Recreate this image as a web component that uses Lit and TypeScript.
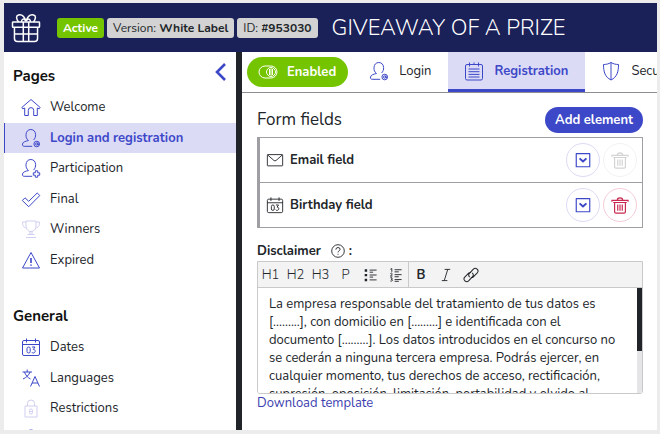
import { LitElement, html, css, svg } from "lit";
import { customElement, state } from "lit/decorators.js";
import { classMap } from "lit/directives/class-map.js";

const icons: Record<string, unknown> = {
  home: svg`<path d="M.8 10.500 10 2.500l9.200 8-1 1.300-1.900-.8V18.500h-3.600v-5.200a2.700 2.700 0 0 0-5.400 0v5.200H3.700V11l-1.900.8z"/>`,
  userAt: svg`<path d="M7.500 12.500C5.500 11 4.800 9 5 6.500 5.200 3.500 7 1.500 9.800 1.500s4.700 2 4.800 5c.1 2-.5 4-2 5.500M7.500 12.500c-3 .8-5.500 1.300-6 3.500-.3 1.300.3 2.300 1.700 2.300h8"/><circle cx="15.700" cy="16" r="2.800"/><circle cx="15.700" cy="16" r="1.200"/><path d="M16.900 14.500v2l1.200.3"/>`,
  userPlus: svg`<path d="M7.500 12.500C5.500 11 4.800 9 5 6.500 5.200 3.500 7 1.500 9.800 1.500s4.700 2 4.800 5c.1 2-.5 4-2 5.500M7.500 12.500c-3 .8-5.500 1.300-6 3.500-.3 1.300.3 2.300 1.700 2.300h8"/><path d="M14.300 12.800h2.400v2h2v2.400h-2v2h-2.400v-2h-2v-2.400h2z"/>`,
  check: svg`<path d="m1.300 11.500 2.700-2.700 3.700 3.500 8.500-8.300 2.600 2.500L7.700 17.700z"/>`,
  trophy: svg`<path d="M5 2h10v4c0 4-2 6.500-5 6.500S5 10 5 6zM5 3H1.500c0 4 1 5.500 4.200 6M15 3h3.500c0 4-1 5.500-4.200 6M9 12.500v3h2v-3M6.500 15.500h7M5 18.500h10"/>`,
  warning: svg`<path d="M10 2.500 1.500 18h17z"/><path d="M10 8v5m0 1.500v1.300" stroke-width="1.600"/>`,
  calendar: svg`<rect x="1.500" y="3.500" width="17" height="15" rx="1.500"/><path d="M1.500 7.500h17M5.500 1.500v4M14.500 1.500v4"/><rect x="6" y="10" width="3.200" height="6" rx="1.600"/><path d="M11 10h3l-1.700 2.400c2.800 0 2.300 3.600 0 3.600q-1.100 0-1.500-.8"/>`,
  languages: svg`<path d="M1.500 4h9.500M6.200 1.500V4M3.500 4c1 3 3 5.500 6 7M9 4c-1 3-3.500 5.500-7 7M9.500 18.500l4.500-10 4.500 10M11 15h6"/>`,
  lock: svg`<rect x="4" y="8" width="12" height="11"/><path d="M6.500 8V5.500a3.500 3.500 0 0 1 7 0V8"/><rect x="8.500" y="11" width="3" height="5" rx="1.500"/><path d="M8.500 13.500h3"/>`,
  dot: svg`<circle cx="10" cy="5.500" r="4.500"/>`,
  form: svg`<rect x="1.500" y="3.500" width="17" height="15.500" rx="1.500"/><path d="M5.500 1.500v4M10 1.500v2M14.500 1.500v4M4.500 8h11M4.500 10.700h11M4.500 13.400h11M4.500 16h11"/>`,
  shield: svg`<path d="M10 1.500C7.500 3 5 3.500 2.500 3.500c0 7.500 1.500 12.500 7.500 15.500 6-3 7.500-8 7.500-15.500-2.500 0-5-.5-7.500-2zM10 1.500V19"/>`,
  toggle: svg`<rect x="1" y="4" width="18" height="12" rx="6"/><circle cx="13" cy="10" r="4.500"/><path d="M11.500 7v6M13 6.500v7M14.500 7v6"/>`,
  mail: svg`<rect x="1.500" y="4" width="17" height="12.500" rx=".5"/><path d="m2 4.500 6.800 6q1.200 1 2.400 0l6.800-6"/>`,
  down: svg`<rect x="2.500" y="3" width="15" height="14.500" stroke-width="1.300"/><path d="m6.200 8.200 3.800 3.500 3.800-3.500" stroke-width="2.200"/>`,
  trash: svg`<path d="M.5 4.800h19M1 6.500V4.800M19 6.500V4.800M7 4.500c0-2 1-2.500 3-2.500s3 .5 3 2.500M2.500 7.200h15M4 7.200V17.500q0 1.500 1.500 1.500h9q1.500 0 1.500-1.500V7.200M7.500 9.500v7M10 9.500v7M12.500 9.500v7" stroke-width="1.300"/>`,
  bullets: svg`<path d="M8 3h10M8 6h5M8 10h10M8 13h5M8 17h10"/><path d="M1 3.500h3.500M1 10.200h3.500M1 17h3.500" stroke-width="3.500"/>`,
  numbers: svg`<path d="M8 2.500h10M8 5.500h6M8 9.500h10M8 12.500h6M8 16.500h10M8 19h6"/><path d="m2 1.800 2-1v4.700M2 8q2-1.500 2.500 0T2 11.500h3M2 14q2.500-1 2.500.7 0 1.300-1.500 1.300 2 0 2 1.500-.5 2-3 1"/>`,
  italic: svg`<path d="M8 2h8M4 18h8M12.500 2l-5 16"/>`,
  link: svg`<path d="M8.500 12.800q-2.700-2.500-.2-5.200l4.700-5q2.200-2 4.600.2t.2 4.600l-4.800 4.800q-1.400 1.400-3.200.9M11.500 7.200q2.700 2.500.2 5.200l-4.700 5q-2.200 2-4.600-.2t-.2-4.600L7 7.800q1.400-1.400 3.200-.9"/>`,
  help: svg`<circle cx="10" cy="10" r="9"/><path d="M7 8q0-3 3-3t3 2.600c0 2-3 2.200-3 4.400M10 14v1.300"/>`,
  back: svg`<path d="m14 2-8 8 8 8" stroke-width="2.600"/>`,
  gift: svg`<rect x="1" y="6" width="18" height="3.500" rx=".4"/><path d="M2.300 9.500V17q0 2 2 2h11.400q2 0 2-2V9.500M8.200 6v13M11.800 6v13M2.300 14h15.400M10 5.500C9 2.500 7 .8 5 1.300S3.600 4.300 5 6M10 5.500c1-3 3-4.700 5-4.200s1.400 3 0 4.700M10 5.500C8.500 3 7 4 7 6M10 5.500c1.500-2.500 3-1.500 3 .5"/>`,
};

const icon = (name: string) => html`<svg class="icon" viewBox="0 0 20 20" aria-hidden="true">${icons[name]}</svg>`;

interface NavItem { label: string; icon: string; faint?: boolean; current?: boolean }

const pages: NavItem[] = [
  { label: "Welcome", icon: "home" },
  { label: "Login and registration", icon: "userAt", current: true },
  { label: "Participation", icon: "userPlus" },
  { label: "Final", icon: "check" },
  { label: "Winners", icon: "trophy", faint: true },
  { label: "Expired", icon: "warning" },
];

const general: NavItem[] = [
  { label: "Dates", icon: "calendar" },
  { label: "Languages", icon: "languages" },
  { label: "Restrictions", icon: "lock", faint: true },
];

const tabs: NavItem[] = [
  { label: "Login", icon: "userAt" },
  { label: "Registration", icon: "form", current: true },
  { label: "Security", icon: "shield" },
];

const fields = [
  { label: "Email field", icon: "mail", locked: true },
  { label: "Birthday field", icon: "calendar", locked: false },
];

const disclaimer = `La empresa responsable del tratamiento de tus datos es
[.........], con domicilio en [.........] e identificada con el
documento [.........]. Los datos introducidos en el concurso no
se cederán a ninguna tercera empresa. Podrás ejercer, en
cualquier momento, tus derechos de acceso, rectificación,
supresión, oposición, limitación, portabilidad y olvido al`;

@customElement("app-root")
export class AppRoot extends LitElement {
  @state() private text = disclaimer;

  static styles = css`
    :host {
      display: block;
      box-sizing: border-box;
      height: 100vh;
      padding: 3px 3px 4px 4px;
      background: #ececec;
      color: #212529;
      font: 13px/18px Nunito, "Noto Sans", sans-serif;
    }
    *, *::before { box-sizing: border-box; }
    button { font: inherit; color: inherit; border: 0; background: none; padding: 0; cursor: pointer; }
    a { color: inherit; text-decoration: none; }
    h1, h2, ul { margin: 0; padding: 0; list-style: none; }
    .icon { width: 20px; height: 20px; flex: none; fill: none; stroke: currentColor; stroke-width: 1; stroke-linejoin: round; display: block; }
    .app { height: 100%; display: flex; flex-direction: column; background: #fff; overflow: hidden; }
    .top { flex: none; height: 49px; display: flex; align-items: center; background: #1a2058; color: #fff; padding-left: 7px; white-space: nowrap; }
    .top .icon { width: 30px; height: 30px; margin-right: 16px; }
    .badges { display: flex; gap: 3px; margin-right: 14px; }
    .badge { height: 20px; border-radius: 3px; padding: 0 6px; line-height: 20px; font-size: 12px; background: #d3d3d3; color: #212529; }
    .badge.active { background: #74c400; color: #fff; font-weight: 700; }
    .title { font-size: 22px; line-height: 30px; font-weight: 300; }
    .body { flex: 1; min-height: 0; display: flex; }
    .side { flex: none; width: 238px; border-right: 6px solid #212529; overflow: hidden; }
    .head { display: flex; justify-content: space-between; align-items: center; height: 40px; padding: 8px 5px 0 9px; }
    .general { margin-top: 17px; }
    .heading { font-size: 15px; line-height: 20px; font-weight: 700; color: #111; }
    .collapse { color: #3d48c8; margin-top: -8px; }
    .collapse .icon { stroke-linejoin: miter; }
    .list { display: flex; flex-direction: column; justify-content: space-between; height: 183px; }
    .list.short { height: 122px; }
    .item { display: flex; align-items: center; gap: 9px; height: 30px; padding-left: 17px; color: #212529; }
    .item .icon, .tab .icon { color: #3d48c8; }
    .item.current { padding-left: 16px; border-left: 1px solid #3d48c8; background: #dcdbf6; color: #3d48c8; font-weight: 700; }
    .item.faint .icon { color: #cfcff0; }
    .main { flex: 1; min-width: 0; overflow: hidden; }
    .tabs { display: flex; height: 41px; border-bottom: 1px solid #8d8d93; padding-left: 5px; overflow: hidden; white-space: nowrap; }
    .enabled { flex: none; align-self: center; display: flex; align-items: center; gap: 9px; height: 30px; border-radius: 15px; background: #74c400; color: #fff; font-weight: 700; padding: 0 12px 0 11px; margin-right: 5px; }
    .tab { flex: none; display: flex; align-items: center; gap: 10px; height: 40px; padding: 0 17px 0 16px; color: #212529; border-bottom: 3px solid transparent; }
    .tab.current { background: #dcdbf6; color: #3d48c8; font-weight: 700; border-bottom-color: #3d48c8; }
    .content { padding: 14px 14px 0 15px; }
    .bar { display: flex; justify-content: space-between; align-items: center; height: 26px; margin-bottom: 4px; }
    .bar h2 { font-size: 17px; line-height: 24px; font-weight: 400; }
    .add { height: 26px; border-radius: 13px; padding: 0 10px; background: #3d48c8; color: #fff; font-weight: 700; }
    .fields { border: 1px solid #9f9fa3; border-left-width: 3px; }
    .field { display: flex; align-items: center; height: 44px; padding: 0 5px 0 6px; font-weight: 700; }
    .field + .field { border-top: 1px solid #9f9fa3; height: 45px; }
    .field > .icon { width: 18px; height: 18px; margin-right: 6px; }
    .field .name { flex: 1; }
    .round { width: 34px; height: 34px; display: grid; place-items: center; border: 1px solid #dcdbf6; border-radius: 50%; color: #3d48c8; margin-left: 3px; }
    .round .icon { width: 18px; height: 18px; }
    .round.remove { border-color: #f6ccd6; color: #c8284f; }
    .round.remove:disabled { border-color: #f2f2f2; color: #d3d3d3; }
    .label { display: flex; align-items: center; gap: 4px; height: 20px; margin: 13px 0 0; font-weight: 700; }
    .label .icon { width: 14px; height: 14px; margin-left: 6px; stroke-width: 1.3; }
    .editor { position: relative; border: 1px solid #c9c9cb; border-radius: 0 0 3px 3px; overflow: hidden; }
    .tools { display: flex; height: 26px; background: #f3f3f3; border-bottom: 1px solid #c9c9cb; }
    .tool { width: 25px; display: grid; place-items: center; font-weight: 300; }
    .tool.bold { font-weight: 700; }
    .tool.split { border-left: 1px solid #c9c9cb; }
    .tool .icon { width: 14px; height: 14px; stroke-width: 1.3; }
    .tool .icon.large, .tool.large .icon { width: 16px; height: 16px; }
    .text { display: block; width: 100%; height: 105px; border: 0; outline: 0; resize: none; padding: 7px 16px 0 11px; font: inherit; color: inherit; background: #fff; overflow: hidden; white-space: pre; }
    .track { position: absolute; top: 26px; right: 0; bottom: 0; width: 5px; background: #e5e5e8; }
    .thumb { height: 60%; background: #212529; }
    .download { display: block; color: #3d3fb0; }
  `;

  private nav(items: NavItem[], cls: string) {
    return html`<ul class="list ${cls}">
      ${items.map(i => html`<li><a href="#" class=${classMap({ item: true, current: !!i.current, faint: !!i.faint })}>${icon(i.icon)}<span>${i.label}</span></a></li>`)}
      ${cls ? html`<li><a href="#" class="item" aria-label="More">${icon("dot")}</a></li>` : ""}
    </ul>`;
  }

  render() {
    return html`<div class="app">
      <header class="top">
        ${icon("gift")}
        <div class="badges">
          <span class="badge active">Active</span>
          <span class="badge">Version: <b>White Label</b></span>
          <span class="badge">ID: <b>#953030</b></span>
        </div>
        <h1 class="title">GIVEAWAY OF A PRIZE</h1>
      </header>
      <div class="body">
        <nav class="side">
          <div class="head"><h2 class="heading">Pages</h2><button class="collapse" aria-label="Collapse">${icon("back")}</button></div>
          ${this.nav(pages, "")}
          <div class="head general"><h2 class="heading">General</h2></div>
          ${this.nav(general, "short")}
        </nav>
        <main class="main">
          <div class="tabs">
            <button class="enabled">${icon("toggle")}<span>Enabled</span></button>
            ${tabs.map(t => html`<button class=${classMap({ tab: true, current: !!t.current })}>${icon(t.icon)}<span>${t.label}</span></button>`)}
          </div>
          <div class="content">
            <div class="bar"><h2>Form fields</h2><button class="add">Add element</button></div>
            <div class="fields">
              ${fields.map(f => html`<div class="field">${icon(f.icon)}<span class="name">${f.label}</span>
                <button class="round" aria-label="Expand">${icon("down")}</button>
                <button class="round remove" aria-label="Delete" ?disabled=${f.locked}>${icon("trash")}</button></div>`)}
            </div>
            <label class="label" for="disclaimer">Disclaimer ${icon("help")}<span>:</span></label>
            <div class="editor">
              <div class="tools">
                <button class="tool">H1</button><button class="tool">H2</button><button class="tool">H3</button><button class="tool">P</button>
                <button class="tool" aria-label="Bulleted list">${icon("bullets")}</button>
                <button class="tool" aria-label="Numbered list">${icon("numbers")}</button>
                <button class="tool split bold">B</button>
                <button class="tool" aria-label="Italic">${icon("italic")}</button>
                <button class="tool large" aria-label="Link">${icon("link")}</button>
              </div>
              <textarea class="text" id="disclaimer" .value=${this.text} @input=${(e: Event) => { this.text = (e.target as HTMLTextAreaElement).value; }}></textarea>
              <div class="track"><div class="thumb"></div></div>
            </div>
            <a class="download" href="#">Download template</a>
          </div>
        </main>
      </div>
    </div>`;
  }
}
